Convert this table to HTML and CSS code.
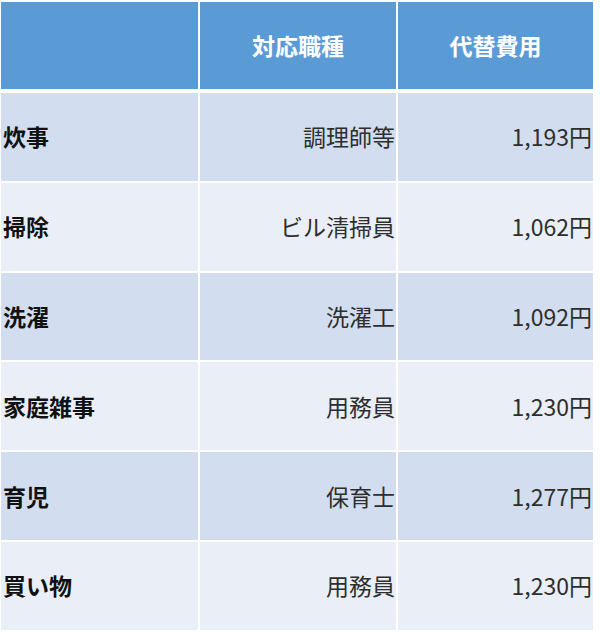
FILE: index.html
```html
<!DOCTYPE html>
<html lang="ja">
<head>
<meta charset="utf-8">
<link rel="stylesheet" href="styles.css">
</head>
<body>
<div class="table">
  <div class="cell head"></div>
  <div class="cell head center">対応職種</div>
  <div class="cell head center">代替費用</div>

  <div class="cell odd label">炊事</div>
  <div class="cell odd num">調理師等</div>
  <div class="cell odd num">1,193円</div>

  <div class="cell even label">掃除</div>
  <div class="cell even num">ビル清掃員</div>
  <div class="cell even num">1,062円</div>

  <div class="cell odd label">洗濯</div>
  <div class="cell odd num">洗濯工</div>
  <div class="cell odd num">1,092円</div>

  <div class="cell even label">家庭雑事</div>
  <div class="cell even num">用務員</div>
  <div class="cell even num">1,230円</div>

  <div class="cell odd label">育児</div>
  <div class="cell odd num">保育士</div>
  <div class="cell odd num">1,277円</div>

  <div class="cell even label">買い物</div>
  <div class="cell even num">用務員</div>
  <div class="cell even num">1,230円</div>
</div>
</body>
</html>
```

FILE: styles.css
```css
html, body {
  margin: 0;
  padding: 0;
  background: #ffffff;
}

body {
  font-family: "Noto Sans CJK JP", "Noto Sans", sans-serif;
  color: #262626;
}

.table {
  display: grid;
  grid-template-columns: 197px 196px 195px;
  grid-template-rows: 89px repeat(6, 87.8px);
  column-gap: 2px;
  row-gap: 2px;
  padding: 2px 0 0 1px;
  width: 592px;
}

.cell {
  display: flex;
  align-items: center;
  font-size: 23px;
  line-height: 1;
  padding: 0 3px 0 3px;
}

.head {
  background: #5b9bd5;
  color: #ffffff;
  font-weight: 700;
  margin-bottom: 2px;
}

.center {
  justify-content: center;
}

.odd {
  background: #d2deef;
}

.even {
  background: #eaeff7;
}

.label {
  font-weight: 700;
  color: #111111;
  padding-left: 2px;
}

.num {
  justify-content: flex-end;
  padding-right: 1px;
  color: #2e2e2e;
}
```
